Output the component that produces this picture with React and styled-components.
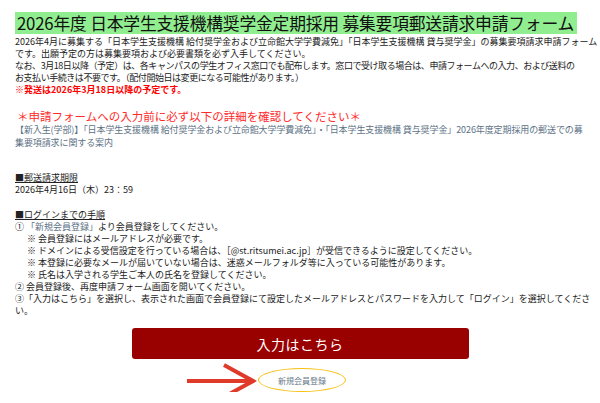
import React from 'react';
import styled, { createGlobalStyle } from 'styled-components';

const GlobalStyle = createGlobalStyle`
    body {
        margin: 0;
        background: #fff;
        font-family: "Noto Sans CJK JP", "Noto Sans", sans-serif;
        color: #222;
    }
`;

const Page = styled.div`
    width: 570px;
    padding: 11px 15px 0;
`;

const Title = styled.h1`
    display: inline-block;
    margin: 0;
    padding: 0 3px 0 2px;
    background-color: #90ee90;
    color: #111;
    font-size: 16.8px;
    font-weight: normal;
    line-height: 22px;
    letter-spacing: -0.2px;
    white-space: nowrap;
`;

const Para = styled.p`
    margin: ${({top}) => top || 0}px 0 0;
    padding-left: ${({indent}) => indent ? '12px' : '0'};
    font-size: 9px;
    line-height: 12px;
    color: ${({red}) => red ? '#ff0000' : '#222'};
    font-weight: ${({red}) => red ? 'bold' : 'normal'};
    white-space: ${({fixed}) => fixed ? 'nowrap' : 'normal'};
    letter-spacing: ${({tight}) => tight ? '-0.45px' : '0'};
`;

const CheckHeading = styled.h2`
    margin: 12px 0 0;
    font-size: 11.5px;
    line-height: 16px;
    font-weight: normal;
    color: #ff2a2a;
    padding-left: 2px;
`;

const GuideLink = styled.a`
    display: block;
    font-size: 9px;
    line-height: 12.5px;
    letter-spacing: -0.1px;
    color: #5d7285;
    text-decoration: none;
    white-space: nowrap;
`;

const Label = styled.p`
    margin: ${({top}) => top}px 0 0;
    font-size: 9px;
    line-height: 12px;
    color: #222;
    text-decoration: underline;
`;

const Link = styled.a`
    color: #5d7285;
    text-decoration: none;
`;

const Button = styled.button`
    display: block;
    width: 337px;
    height: 31px;
    margin: 11px auto 0;
    border: none;
    border-radius: 3px;
    background-color: #990000;
    color: #fff;
    font-family: inherit;
    font-size: 14px;
    letter-spacing: 0.5px;
    cursor: pointer;
`;

const Annotation = styled.div`
    position: relative;
    display: flex;
    justify-content: center;
    margin-top: 9px;
    padding-left: 4px;
`;

const Ellipse = styled.a`
    display: flex;
    align-items: center;
    justify-content: center;
    width: 86px;
    height: 22px;
    border: 1.5px solid #f5c010;
    border-radius: 50%;
    font-size: 8px;
    color: #6a7a8a;
    text-decoration: none;
`;

const Arrow = styled.svg`
    position: absolute;
    left: 172px;
    top: -5px;
`;

export default function App() {
    return (
        <Page>
            <GlobalStyle />
            <Title>2026年度 日本学生支援機構奨学金定期採用 募集要項郵送請求申請フォーム</Title>
            <Para top={1} fixed>
                2026年4月に募集する「日本学生支援機構 給付奨学金および立命館大学学費減免」「日本学生支援機構 貸与奨学金」の募集要項請求申請フォーム<br />
                です。出願予定の方は募集要項および必要書類を必ず入手してください。
            </Para>
            <Para fixed tight>
                なお、3月18日以降（予定）は、各キャンパスの学生オフィス窓口でも配布します。窓口で受け取る場合は、申請フォームへの入力、および送料の<br />
                お支払い手続きは不要です。（配付開始日は変更になる可能性があります。）
            </Para>
            <Para red>※発送は2026年3月18日以降の予定です。</Para>

            <CheckHeading>＊申請フォームへの入力前に必ず以下の詳細を確認してください＊</CheckHeading>
            <GuideLink href="#">
                【新入生(学部)】「日本学生支援機構 給付奨学金および立命館大学学費減免」・「日本学生支援機構 貸与奨学金」2026年度定期採用の郵送での募<br />
                集要項請求に関する案内
            </GuideLink>

            <Label top={23}>■郵送請求期限</Label>
            <Para>2026年4月16日（木）23：59</Para>

            <Label top={13}>■ログインまでの手順</Label>
            <Para>① <Link href="#">「新規会員登録」</Link>より会員登録をしてください。</Para>
            <Para indent>※ 会員登録にはメールアドレスが必要です。</Para>
            <Para indent>※ ドメインによる受信設定を行っている場合は、［@st.ritsumei.ac.jp］が受信できるように設定してください。</Para>
            <Para indent>※ 本登録に必要なメールが届いていない場合は、迷惑メールフォルダ等に入っている可能性があります。</Para>
            <Para indent>※ 氏名は入学される学生ご本人の氏名を登録してください。</Para>
            <Para>② 会員登録後、再度申請フォーム画面を開いてください。</Para>
            <Para fixed>
                ③「入力はこちら」を選択し、表示された画面で会員登録にて設定したメールアドレスとパスワードを入力して「ログイン」を選択してくださ<br />
                い。
            </Para>

            <Button>入力はこちら</Button>

            <Annotation>
                <Arrow width="70" height="36" viewBox="0 0 70 36">
                    <path d="M0 18 H65" stroke="#e03a2a" strokeWidth="4" fill="none" />
                    <path d="M37 2 L66 18 L37 34" stroke="#e03a2a" strokeWidth="4" fill="none" />
                </Arrow>
                <Ellipse href="#">新規会員登録</Ellipse>
            </Annotation>
        </Page>
    );
}
